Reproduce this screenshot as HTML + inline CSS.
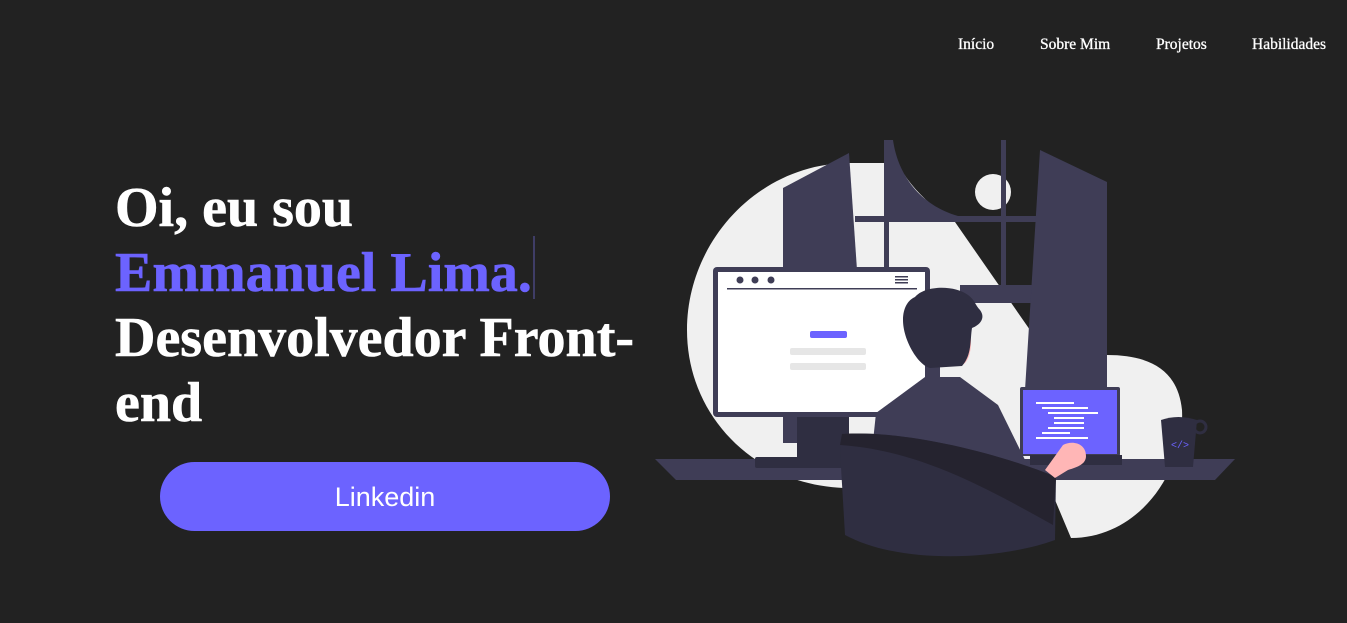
<!DOCTYPE html>
<html><head><meta charset="utf-8">
<style>
html,body{margin:0;padding:0;background:#222222;width:1347px;height:623px;overflow:hidden;position:relative}
.nav a{position:absolute;top:36px;font-family:"Liberation Serif",serif;font-size:15.5px;color:#fff;text-decoration:none;font-weight:normal;-webkit-text-stroke:0.3px #fff}
h1{position:absolute;left:115px;top:176px;margin:0;font-family:"Liberation Serif",serif;font-weight:bold;font-size:56px;line-height:65px;color:#fff;width:560px;-webkit-text-stroke:0.6px currentColor}
h1 .p{color:#6c63ff}
.caret{position:absolute;left:533px;top:236px;width:2px;height:63px;background:#3f3d66}
.btn{position:absolute;left:160px;top:462px;width:450px;height:69px;border-radius:35px;background:#6c63ff;color:#fff;font-family:"Liberation Sans",sans-serif;font-size:27px;text-align:center;line-height:71px}
svg{position:absolute;left:0;top:0}
</style></head><body>
<div class="nav">
<a style="left:958px">Início</a>
<a style="left:1040px">Sobre Mim</a>
<a style="left:1156px">Projetos</a>
<a style="left:1252px">Habilidades</a>
</div>
<h1>Oi, eu sou<br><span class="p">Emmanuel Lima.</span><br>Desenvolvedor Front-<br>end</h1>
<div class="caret"></div>
<div class="btn">Linkedin</div>
<svg width="1347" height="623" viewBox="0 0 1347 623">
<path fill="#f0f0f0" d="M850,163 C760,163 687,240 687,330 C687,420 760,488 850,488 L1050,488 L1071,538 C1140,538 1185,470 1182,410 C1178,370 1150,355 1107,355 L1030,330 L955,222 C920,200 895,170 890,140 L884,140 L884,163 Z"/>
<path fill="#3f3d56" d="M884,140 L893,140 C898,175 920,205 958,216 L884,216 Z"/>
<circle cx="993" cy="192" r="18" fill="#f0f0f0"/>
<rect x="884" y="140" width="5" height="130" fill="#3f3d56"/>
<rect x="1001" y="140" width="5" height="150" fill="#3f3d56"/>
<rect x="855" y="216" width="182" height="6" fill="#3f3d56"/>
<rect x="960" y="285" width="73" height="18" fill="#3f3d56"/>
<path fill="#3f3d56" d="M783,188 L849,153 L857,270 L783,270 Z"/>
<rect x="783" y="410" width="20" height="33" fill="#3f3d56"/>
<path fill="#3f3d56" d="M1040,150 L1107,182 L1107,390 L1025,390 Z"/>
<path fill="#3f3d56" d="M655,459 L1235,459 L1215,480 L676,480 Z"/>
<rect x="797" y="415" width="52" height="50" fill="#2f2e41"/>
<rect x="755" y="457" width="95" height="11" rx="2" fill="#2f2e41"/>
<rect x="713" y="267" width="217" height="150" rx="4" fill="#3f3d56"/>
<rect x="718" y="272" width="207" height="140" fill="#fff"/>
<circle cx="740" cy="280" r="3.5" fill="#3f3d56"/>
<circle cx="755" cy="280" r="3.5" fill="#3f3d56"/>
<circle cx="771" cy="280" r="3.5" fill="#3f3d56"/>
<rect x="895" y="276" width="13" height="1.5" fill="#3f3d56"/>
<rect x="895" y="279" width="13" height="1.5" fill="#3f3d56"/>
<rect x="895" y="282" width="13" height="1.5" fill="#3f3d56"/>
<rect x="727" y="288" width="190" height="1.5" fill="#3f3d56"/>
<rect x="810" y="331" width="37" height="7" rx="2" fill="#6c63ff"/>
<rect x="790" y="348" width="76" height="7" rx="2" fill="#e6e6e6"/>
<rect x="790" y="363" width="76" height="7" rx="2" fill="#e6e6e6"/>
<rect x="1020" y="387" width="100" height="69" rx="2" fill="#3f3d56"/>
<rect x="1023" y="390" width="94" height="64" fill="#6c63ff"/>
<g fill="#fff">
<rect x="1036" y="402" width="38" height="2"/><rect x="1042" y="407" width="46" height="2"/><rect x="1048" y="412" width="50" height="2"/>
<rect x="1054" y="417" width="30" height="2"/><rect x="1054" y="422" width="30" height="2"/><rect x="1048" y="427" width="36" height="2"/>
<rect x="1042" y="432" width="28" height="2"/><rect x="1036" y="437" width="52" height="2"/>
</g>
<rect x="1030" y="455" width="92" height="10" fill="#2f2e41"/>
<circle cx="1200" cy="427" r="6" fill="none" stroke="#2f2e41" stroke-width="3"/>
<path fill="#2f2e41" d="M1161,420 Q1178,414 1197,420 L1193,467 L1165,467 Z"/>
<text x="1171" y="448" font-family="Liberation Mono,monospace" font-size="10" fill="#6c63ff">&lt;/&gt;</text>
<path fill="#3f3d56" d="M876,413 L925,377 L960,377 L998,405 L1030,470 L870,470 Z"/>
<rect x="930" y="365" width="10" height="14" fill="#3f3d56"/>
<path fill="#ffb6b6" d="M955,315 C975,315 975,360 962,365 L950,365 Z"/>
<path fill="#2f2e41" d="M915,297 C925,285 955,285 968,295 C975,300 975,305 980,310 C986,318 980,325 972,328 C970,340 972,355 962,366 L930,368 C918,365 903,340 903,320 C903,308 908,300 915,297 Z"/>
<path fill="#2f2e41" d="M842,434 C900,430 990,450 1056,477 L1055,540 C1000,560 900,565 845,535 L840,450 Z"/>
<path fill="#25232f" d="M842,434 C900,430 990,450 1056,477 L1053,525 C990,490 920,450 840,445 Z"/>
<path fill="#ffb6b6" d="M1045,470 L1063,445 C1072,440 1086,443 1086,456 C1086,464 1078,467 1068,470 L1055,478 Z"/>
</svg>
</body></html>
